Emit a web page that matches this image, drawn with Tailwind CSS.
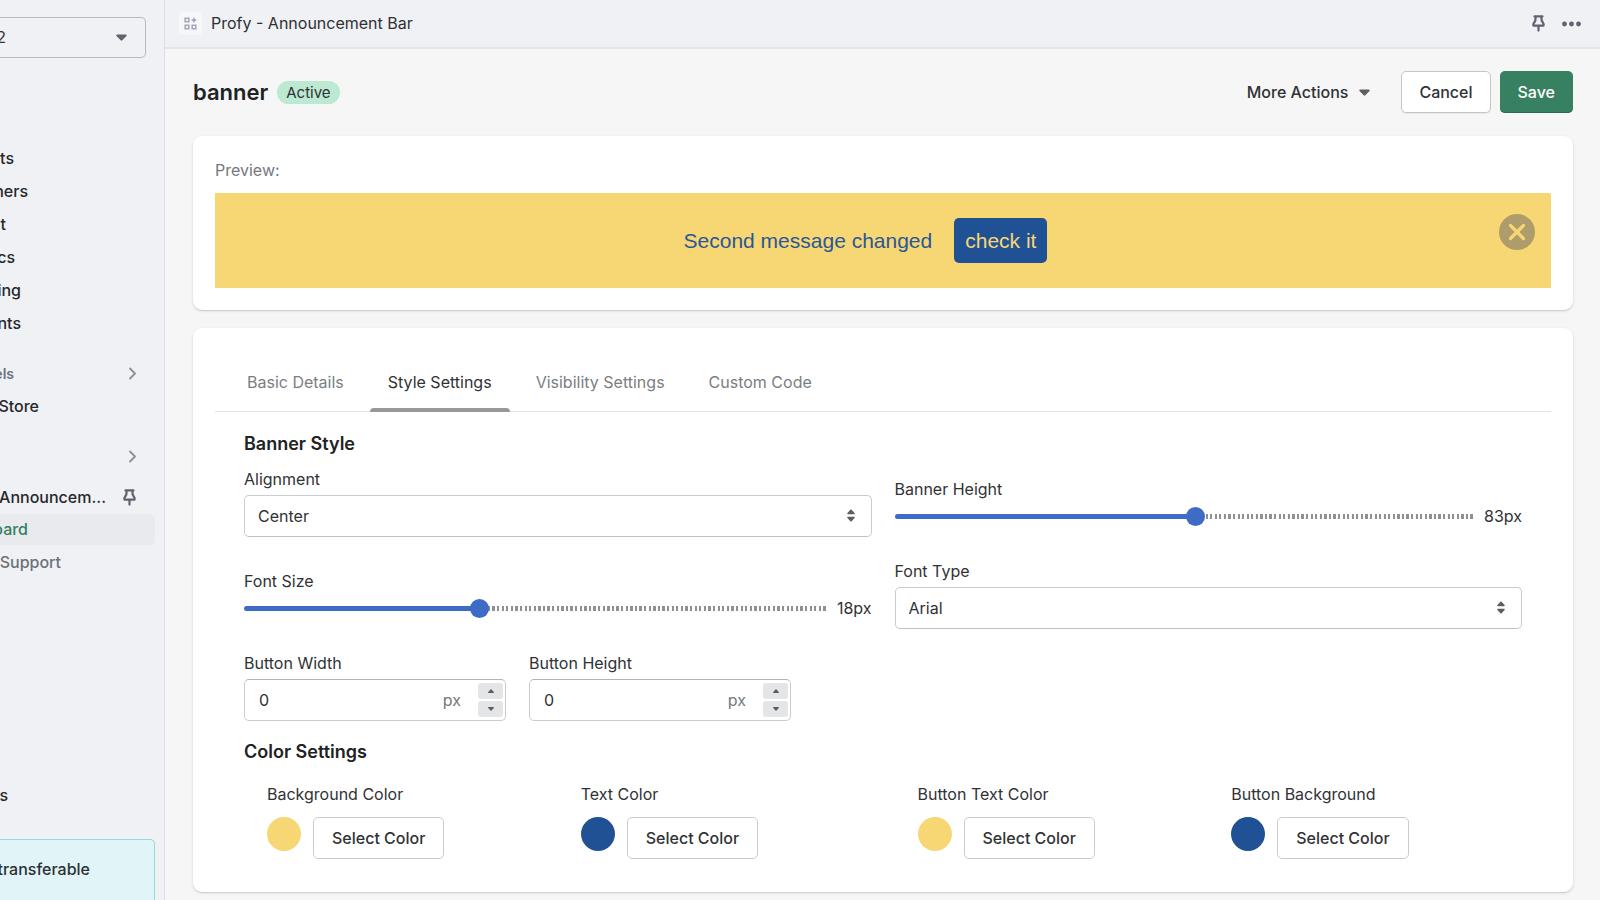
<!DOCTYPE html>
<html lang="en">
  <head>
    <meta charset="UTF-8" />
    <meta name="viewport" content="width=device-width, initial-scale=1.0" />
    <title>Profy - Announcement Bar</title>
    <script src="https://cdn.jsdelivr.net/npm/@tailwindcss/browser@4"></script>
  </head>

  <body class="flex h-screen overflow-hidden bg-[#f6f6f7] font-['Inter','Liberation_Sans',sans-serif] text-[16px] leading-[23px] text-[#303235]">
    <!-- Sidebar -->
    <aside class="flex w-[165px] shrink-0 flex-col overflow-hidden border-r border-[#dcdee2] bg-[#f0f1f4] font-medium">
      <button class="mt-[17px] flex h-[41px] w-[146px] shrink-0 items-center justify-between rounded-r-[5px] border border-l-0 border-[#b5b8c4] pr-[18px] font-normal" aria-label="Switch store">
        <span class="flex w-[6px] justify-end">2</span>
        <svg class="h-[7px] w-[11px]" viewBox="0 0 11 7" fill="#5e6370"><path d="M1.2.5h8.600c.8 0 1.200.9.700 1.500L6.300 6.300c-.4.5-1.200.5-1.600 0L.5 2C0 1.400.4.500 1.200.5z" /></svg>
      </button>

      <nav class="mt-[84px] flex flex-col text-[#26282c]">
        <a href="#" class="flex h-[33px] w-[14px] items-center justify-end">ts</a>
        <a href="#" class="flex h-[33px] w-[28px] items-center justify-end">ners</a>
        <a href="#" class="flex h-[33px] w-[6px] items-center justify-end">t</a>
        <a href="#" class="flex h-[33px] w-[15px] items-center justify-end">cs</a>
        <a href="#" class="flex h-[33px] w-[21px] items-center justify-end">ing</a>
        <a href="#" class="flex h-[33px] w-[21px] items-center justify-end">nts</a>
      </nav>

      <button class="mt-[17px] flex h-[33px] items-center justify-between pr-[27px] text-[14px] font-semibold text-[#6b7079]">
        <span class="flex w-[14px] justify-end">els</span>
        <svg class="h-[13px] w-[9px]" viewBox="0 0 9 13" fill="none" stroke="#8b8f9b" stroke-width="1.8" stroke-linecap="round" stroke-linejoin="round"><path d="M2 1.500l5 5-5 5" /></svg>
      </button>
      <a href="#" class="flex h-[32px] w-[39px] items-center justify-end text-[#26282c]">Store</a>

      <button class="mt-[18px] flex h-[33px] items-center justify-end pr-[27px]" aria-label="Apps">
        <svg class="h-[13px] w-[9px]" viewBox="0 0 9 13" fill="none" stroke="#8b8f9b" stroke-width="1.8" stroke-linecap="round" stroke-linejoin="round"><path d="M2 1.500l5 5-5 5" /></svg>
      </button>
      <div class="mt-[8px] flex h-[33px] items-center justify-between pr-[28px] text-[#26282c]">
        <a href="#" class="flex w-[106px] justify-end whitespace-nowrap">Announcem...</a>
        <button aria-label="Unpin app">
          <svg class="h-[17px] w-[13px]" viewBox="0 0 13 17" fill="none" stroke="#5e6370" stroke-width="2.2" stroke-linejoin="round" stroke-linecap="round"><path d="M2.500 1.400h8M3.600 1.400l-.2 4L1.400 9v1.600h10.200V9l-2-3.600-.2-4M6.500 10.600v5" /></svg>
        </button>
      </div>
      <a href="#" class="flex h-[31px] w-[155px] items-center rounded-r-[5px] bg-[#e9eaee] text-[#33805f]"><span class="flex w-[28px] justify-end">oard</span></a>
      <a href="#" class="mt-px flex h-[33px] w-[61px] items-center justify-end text-[#6b7079]">Support</a>

      <div class="mt-auto flex flex-col">
        <a href="#" class="flex h-[33px] w-[8px] items-center justify-end text-[#26282c]">s</a>
        <div class="mt-[27px] h-[61px] w-[155px] rounded-tr-[5px] border-t border-r border-[#98d6e0] bg-[#e1f4f7] pt-[18px] text-[#2b3134]">
          <p class="flex w-[90px] justify-end">transferable</p>
        </div>
      </div>
    </aside>

    <div class="flex min-w-0 grow flex-col">
      <!-- App bar -->
      <header class="flex h-[49px] shrink-0 items-center border-b-2 border-[#e3e4e9] bg-[#f0f1f4] pr-[19px] pl-[14px]">
        <span class="flex size-[23px] items-center justify-center rounded-[4px] bg-[#f6f7f9]">
          <svg class="size-[13px]" viewBox="0 0 13 13" fill="none" stroke="#a3a9b8" stroke-width="1.600"><path d="M1.200 1.200h3.600v3.600H1.200zM1.200 8.200h3.600v3.600H1.200zM8.200 8.200h3.600v3.600H8.200zM9.900 .8v4.600M7.600 3.100h4.600" /></svg>
        </span>
        <span class="ml-[9px] grow text-[#2e3033]">Profy - Announcement Bar</span>
        <button class="mr-[17px]" aria-label="Pin app">
          <svg class="h-[17px] w-[13px]" viewBox="0 0 13 17" fill="none" stroke="#5e6370" stroke-width="2.2" stroke-linejoin="round" stroke-linecap="round"><path d="M2.500 1.400h8M3.600 1.400l-.2 4L1.400 9v1.600h10.200V9l-2-3.600-.2-4M6.500 10.600v5" /></svg>
        </button>
        <button aria-label="More">
          <svg class="h-[6px] w-[19px]" viewBox="0 0 19 6" fill="#5e6370"><circle cx="2.500" cy="3" r="2.400" /><circle cx="9.500" cy="3" r="2.400" /><circle cx="16.500" cy="3" r="2.400" /></svg>
        </button>
      </header>

      <main class="px-[28px] pt-[22px] pr-[27px]">
        <div class="flex h-[42px] items-center">
          <h1 class="text-[22px] leading-[32px] font-semibold text-[#202223]">banner</h1>
          <span class="ml-[9px] rounded-full bg-[#bbe9d2] px-[9px] text-[15px] leading-[23px]">Active</span>
          <button class="mr-[31px] ml-auto flex items-center gap-[11px] font-medium">
            More Actions
            <svg class="h-[7px] w-[11px]" viewBox="0 0 11 7" fill="#5c5f62"><path d="M1.2.5h8.600c.8 0 1.200.9.700 1.500L6.300 6.300c-.4.5-1.200.5-1.600 0L.5 2C0 1.400.4.500 1.200.5z" /></svg>
          </button>
          <button class="h-[42px] rounded-[5px] border border-[#c4c6c9] bg-white px-[17px] font-medium shadow-[0_1px_0_#0000000d]">Cancel</button>
          <button class="ml-[9px] h-[42px] rounded-[5px] bg-[#388062] px-[18px] font-medium text-white shadow-[inset_0_-1px_0_#2b6a50]">Save</button>
        </div>

        <!-- Preview -->
        <section class="mt-[23px] rounded-[9px] bg-white px-[22px] pt-[23px] pb-[22px] shadow-[0_1px_3px_#3f3f4426,0_1px_1px_#3f3f4420]">
          <p class="text-[#75787c]">Preview:</p>
          <div class="relative mt-[11px] flex h-[95px] items-center justify-center bg-[#f7d774] pr-[35px] font-['Liberation_Sans',sans-serif] text-[21px] text-[#2b5698]">
            <span>Second message changed</span>
            <button class="ml-[22px] h-[45px] rounded-[5px] bg-[#215195] px-[11px] text-[#f7d774]">check it</button>
            <button class="absolute top-[21px] right-[16px] flex size-[36px] items-center justify-center rounded-full bg-[#ae9c6c]" aria-label="Close">
              <svg class="size-[18px]" viewBox="0 0 18 18" stroke="#f7d774" stroke-width="3.200" stroke-linecap="round"><path d="M2.500 2.500l13 13M15.500 2.500l-13 13" /></svg>
            </button>
          </div>
        </section>

        <section class="mt-[18px] rounded-[9px] bg-white px-[22px] pt-[32px] pb-[33px] shadow-[0_1px_3px_#3f3f4426,0_1px_1px_#3f3f4420]">
          <!-- Tabs -->
          <div role="tablist" class="flex gap-[8px] border-b border-[#e1e3e5] pl-[14px] text-[#7b7e82]">
            <button role="tab" class="h-[51px] px-[18px] pb-[6px]">Basic Details</button>
            <button role="tab" aria-selected="true" class="relative h-[51px] px-[18px] pb-[6px] text-[#303235] after:absolute after:inset-x-0 after:-bottom-px after:h-[4px] after:rounded-t-[4px] after:bg-[#96989c]">Style Settings</button>
            <button role="tab" class="h-[51px] px-[18px] pb-[6px]">Visibility Settings</button>
            <button role="tab" class="h-[51px] px-[18px] pb-[6px]">Custom Code</button>
          </div>

          <div class="px-[29px]">
            <h2 class="mt-[18px] text-[18px] leading-[27px] font-semibold text-[#202223]">Banner Style</h2>
            <div class="mt-[11px] grid grid-cols-2 items-center gap-x-[23px] gap-y-[23px]">
              <div>
                <label for="alignment" class="mb-[4px] block">Alignment</label>
                <div class="relative">
                  <select id="alignment" class="h-[42px] w-full appearance-none rounded-[5px] border border-[#c9cccf] border-b-[#bfc2c5] bg-white px-[13px]">
                    <option>Left</option>
                    <option selected>Center</option>
                    <option>Right</option>
                  </select>
                  <svg class="pointer-events-none absolute top-[14px] right-[17px] h-[13px] w-[8px]" viewBox="0 0 8 13" fill="#5c5f62"><path d="M1 5.300h6c.7 0 1-.7.600-1.200L4.600.700a.8.8 0 0 0-1.200 0L.4 4.100C0 4.600.3 5.300 1 5.300zM1 7.700h6c.7 0 1 .7.600 1.200l-3 3.400a.8.8 0 0 1-1.200 0L.4 8.900C0 8.400.3 7.700 1 7.700z" /></svg>
                </div>
              </div>

              <div>
                <label for="bannerHeight" class="block">Banner Height</label>
                <div class="mt-[4px] flex items-center gap-[9px]">
                  <input
                    type="range"
                    id="bannerHeight"
                    min="0"
                    max="160"
                    value="83"
                    style="--fill: 52%"
                    class="h-[5px] min-w-0 grow appearance-none rounded-full bg-[linear-gradient(#3d6bc5,#3d6bc5),repeating-linear-gradient(90deg,#8c9196_0_calc(100%/260),transparent_0_calc(100%/127))] bg-[length:var(--fill)_100%,100%_100%] bg-no-repeat [&::-webkit-slider-thumb]:size-[19px] [&::-webkit-slider-thumb]:appearance-none [&::-webkit-slider-thumb]:rounded-full [&::-webkit-slider-thumb]:bg-[#3d6bc5]"
                  />
                  <output for="bannerHeight">83px</output>
                </div>
              </div>

              <div>
                <label for="fontSize" class="block">Font Size</label>
                <div class="mt-[4px] flex items-center gap-[9px]">
                  <input
                    type="range"
                    id="fontSize"
                    min="0"
                    max="45"
                    value="18"
                    style="--fill: 40%"
                    class="h-[5px] min-w-0 grow appearance-none rounded-full bg-[linear-gradient(#3d6bc5,#3d6bc5),repeating-linear-gradient(90deg,#8c9196_0_calc(100%/260),transparent_0_calc(100%/127))] bg-[length:var(--fill)_100%,100%_100%] bg-no-repeat [&::-webkit-slider-thumb]:size-[19px] [&::-webkit-slider-thumb]:appearance-none [&::-webkit-slider-thumb]:rounded-full [&::-webkit-slider-thumb]:bg-[#3d6bc5]"
                  />
                  <output for="fontSize">18px</output>
                </div>
              </div>

              <div>
                <label for="fontType" class="mb-[4px] block">Font Type</label>
                <div class="relative">
                  <select id="fontType" class="h-[42px] w-full appearance-none rounded-[5px] border border-[#c9cccf] border-b-[#bfc2c5] bg-white px-[13px]">
                    <option selected>Arial</option>
                    <option>Georgia</option>
                    <option>Verdana</option>
                  </select>
                  <svg class="pointer-events-none absolute top-[14px] right-[17px] h-[13px] w-[8px]" viewBox="0 0 8 13" fill="#5c5f62"><path d="M1 5.300h6c.7 0 1-.7.600-1.200L4.600.700a.8.8 0 0 0-1.200 0L.4 4.100C0 4.600.3 5.300 1 5.300zM1 7.700h6c.7 0 1 .7.600 1.200l-3 3.400a.8.8 0 0 1-1.200 0L.4 8.900C0 8.400.3 7.700 1 7.700z" /></svg>
                </div>
              </div>

              <div class="flex gap-[23px]">
                <div class="w-[262px]">
                  <label for="buttonWidth" class="mb-[4px] block">Button Width</label>
                  <div class="flex h-[42px] items-center rounded-[5px] border border-[#c9cccf] border-t-[#aeb4b9] bg-white pr-[2px] pl-[14px]">
                    <input type="text" inputmode="numeric" id="buttonWidth" value="0" class="min-w-0 grow outline-none" />
                    <span class="mr-[17px] text-[#75787c]">px</span>
                    <div class="flex flex-col gap-[2px]">
                      <button class="flex h-[16px] w-[25px] items-center justify-center rounded-[3px] bg-[#e4e5e7]" aria-label="Increase width">
                        <svg class="h-[4px] w-[6px]" viewBox="0 0 6 4" fill="#5c5f62"><path d="M3 0l3 3.300c0 .4-.2.700-.6.700H.6C.2 4 0 3.700 0 3.300z" /></svg>
                      </button>
                      <button class="flex h-[16px] w-[25px] items-center justify-center rounded-[3px] bg-[#e4e5e7]" aria-label="Decrease width">
                        <svg class="h-[4px] w-[6px]" viewBox="0 0 6 4" fill="#5c5f62"><path d="M3 4L0 .700C0 .300.2 0 .6 0h4.800c.4 0 .6.300.6.700z" /></svg>
                      </button>
                    </div>
                  </div>
                </div>
                <div class="w-[262px]">
                  <label for="buttonHeight" class="mb-[4px] block">Button Height</label>
                  <div class="flex h-[42px] items-center rounded-[5px] border border-[#c9cccf] border-t-[#aeb4b9] bg-white pr-[2px] pl-[14px]">
                    <input type="text" inputmode="numeric" id="buttonHeight" value="0" class="min-w-0 grow outline-none" />
                    <span class="mr-[17px] text-[#75787c]">px</span>
                    <div class="flex flex-col gap-[2px]">
                      <button class="flex h-[16px] w-[25px] items-center justify-center rounded-[3px] bg-[#e4e5e7]" aria-label="Increase height">
                        <svg class="h-[4px] w-[6px]" viewBox="0 0 6 4" fill="#5c5f62"><path d="M3 0l3 3.300c0 .4-.2.700-.6.700H.6C.2 4 0 3.700 0 3.300z" /></svg>
                      </button>
                      <button class="flex h-[16px] w-[25px] items-center justify-center rounded-[3px] bg-[#e4e5e7]" aria-label="Decrease height">
                        <svg class="h-[4px] w-[6px]" viewBox="0 0 6 4" fill="#5c5f62"><path d="M3 4L0 .700C0 .300.2 0 .6 0h4.800c.4 0 .6.300.6.700z" /></svg>
                      </button>
                    </div>
                  </div>
                </div>
              </div>
            </div>

            <h2 class="mt-[17px] text-[18px] leading-[27px] font-semibold text-[#202223]">Color Settings</h2>
            <div class="mt-[18px] grid grid-cols-2 gap-x-[23px]">
              <div class="grid grid-cols-2">
                <div class="pl-[23px]">
                  <p>Background Color</p>
                  <div class="mt-[11px] flex gap-[12px]">
                    <span class="size-[34px] rounded-full bg-[#f7d774]"></span>
                    <button class="h-[42px] rounded-[5px] border border-[#c9cccf] bg-white px-[18px] font-medium">Select Color</button>
                  </div>
                </div>
                <div class="pl-[23px]">
                  <p>Text Color</p>
                  <div class="mt-[11px] flex gap-[12px]">
                    <span class="size-[34px] rounded-full bg-[#215195]"></span>
                    <button class="h-[42px] rounded-[5px] border border-[#c9cccf] bg-white px-[18px] font-medium">Select Color</button>
                  </div>
                </div>
              </div>
              <div class="grid grid-cols-2">
                <div class="pl-[23px]">
                  <p>Button Text Color</p>
                  <div class="mt-[11px] flex gap-[12px]">
                    <span class="size-[34px] rounded-full bg-[#f7d774]"></span>
                    <button class="h-[42px] rounded-[5px] border border-[#c9cccf] bg-white px-[18px] font-medium">Select Color</button>
                  </div>
                </div>
                <div class="pl-[23px]">
                  <p>Button Background</p>
                  <div class="mt-[11px] flex gap-[12px]">
                    <span class="size-[34px] rounded-full bg-[#215195]"></span>
                    <button class="h-[42px] rounded-[5px] border border-[#c9cccf] bg-white px-[18px] font-medium">Select Color</button>
                  </div>
                </div>
              </div>
            </div>
          </div>
        </section>
      </main>
    </div>
  </body>
</html>
